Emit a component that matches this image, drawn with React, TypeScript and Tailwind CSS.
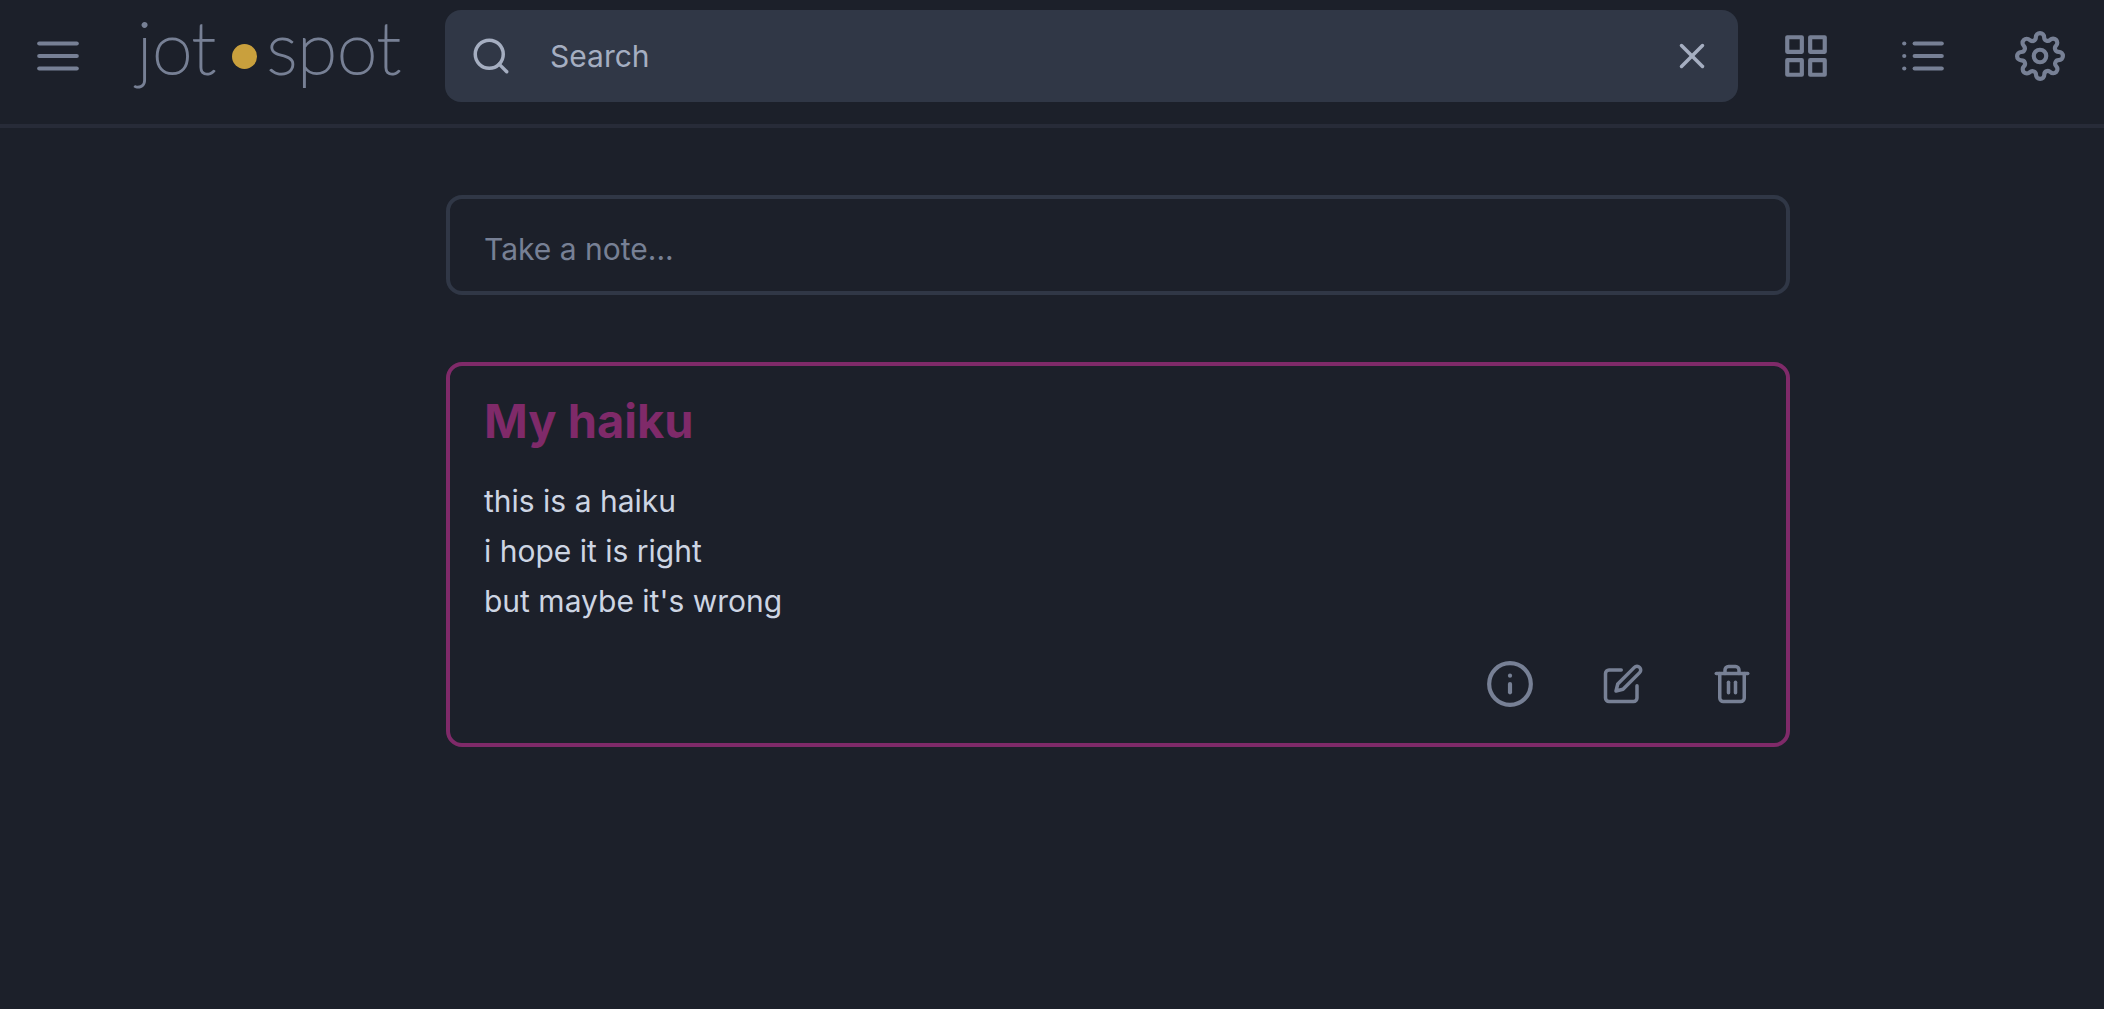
import type { ReactNode } from "react";
import {
  FiEdit,
  FiGrid,
  FiInfo,
  FiList,
  FiMenu,
  FiSearch,
  FiSettings,
  FiTrash2,
  FiX,
} from "react-icons/fi";

function IconButton({ label, children }: { label: string; children: ReactNode }) {
  return (
    <button type="button" aria-label={label} className="shrink-0 text-[#778095]">
      {children}
    </button>
  );
}

function Logo() {
  return (
    <a
      href="#"
      className="flex items-center font-['Lato',sans-serif] text-[73px] leading-[72px] font-thin text-[#778095] [-webkit-text-stroke:2px_currentColor]"
    >
      <span className="pb-5">jot</span>
      <span className="mr-2.5 ml-4 size-[25px] rounded-full bg-[#c9a03d]" />
      <span className="pb-5">spot</span>
    </a>
  );
}

function Header() {
  return (
    <header className="flex items-center border-b-4 border-[#272b38] pt-[10px] pr-[39px] pb-[22px] pl-[33px]">
      <div className="flex w-[412px] shrink-0 items-center gap-[54px]">
        <IconButton label="Menu">
          <FiMenu size={50} />
        </IconButton>
        <Logo />
      </div>
      <form
        role="search"
        className="flex h-[92px] min-w-0 flex-1 items-center rounded-2xl bg-[#303746] px-[25px] text-[#a5aec1]"
      >
        <FiSearch size={42} className="shrink-0" />
        <input
          type="text"
          aria-label="Search"
          placeholder="Search"
          className="ml-[38px] min-w-0 flex-1 bg-transparent text-[30px] leading-[50px] outline-none placeholder:text-[#a5aec1]"
        />
        <button type="button" aria-label="Clear search" className="shrink-0">
          <FiX size={42} />
        </button>
      </form>
      <nav className="ml-[43px] flex shrink-0 gap-[67px]">
        <IconButton label="Grid view">
          <FiGrid size={50} />
        </IconButton>
        <IconButton label="List view">
          <FiList size={50} />
        </IconButton>
        <IconButton label="Settings">
          <FiSettings size={50} />
        </IconButton>
      </nav>
    </header>
  );
}

export default function App() {
  return (
    <div className="min-h-screen bg-[#1c202a] font-['Inter',sans-serif] text-[30px] leading-[50px]">
      <Header />
      <main className="pt-[67px] pl-[132px]">
        <div className="mx-auto flex max-w-[1344px] flex-col gap-[67px]">
          <input
            type="text"
            aria-label="Take a note"
            placeholder="Take a note..."
            className="h-[100px] w-full rounded-2xl border-4 border-[#303746] bg-transparent px-[34px] pt-2 outline-none placeholder:text-[#778095]"
          />
          <article className="rounded-2xl border-4 border-[#7f2a69] pt-[25px] pr-[33px] pb-[34px] pl-[34px] text-[#cdd5e3]">
            <h2 className="text-[47px] leading-[60px] font-bold text-[#7f2a69]">My haiku</h2>
            <p className="mt-[25px] whitespace-pre-line">
              {"this is a haiku\ni hope it is right\nbut maybe it's wrong"}
            </p>
            <div className="mt-[33px] flex items-center justify-end gap-[67px]">
              <IconButton label="Note details">
                <FiInfo size={50} />
              </IconButton>
              <IconButton label="Edit note">
                <FiEdit size={42} />
              </IconButton>
              <IconButton label="Delete note">
                <FiTrash2 size={42} />
              </IconButton>
            </div>
          </article>
        </div>
      </main>
    </div>
  );
}
